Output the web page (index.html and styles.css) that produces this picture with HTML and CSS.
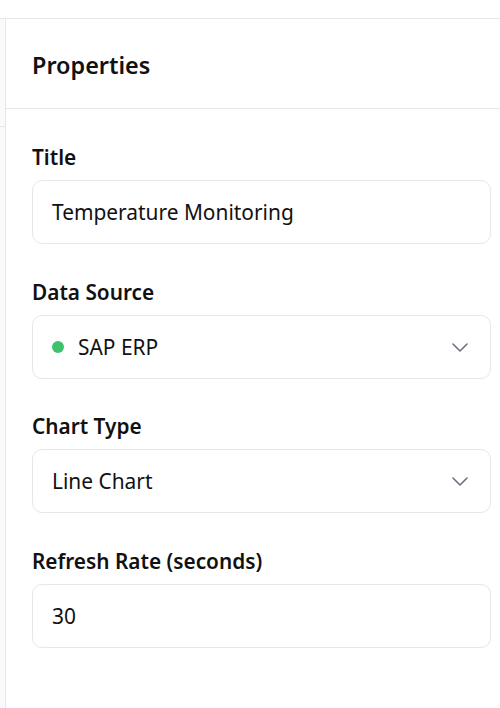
FILE: index.html
```html
<!DOCTYPE html>
<html>
<head>
<meta charset="utf-8">
<link rel="stylesheet" href="styles.css">
</head>
<body>
<div class="app">
  <aside class="side">
    <div class="side-head"></div>
  </aside>
  <section class="panel">
    <header class="panel-head"><h2>Properties</h2></header>
    <div class="panel-body">
      <div class="field">
        <label>Title</label>
        <div class="box">Temperature Monitoring</div>
      </div>
      <div class="field">
        <label>Data Source</label>
        <div class="box select"><span class="dot"></span><span class="val">SAP ERP</span>
          <svg class="chev" viewBox="0 0 16 16" width="16" height="16"><path d="M1 5l7 7 7-7" fill="none" stroke="#6b7280" stroke-width="1.6" stroke-linecap="round" stroke-linejoin="round"/></svg>
        </div>
      </div>
      <div class="field">
        <label>Chart Type</label>
        <div class="box select"><span class="val">Line Chart</span>
          <svg class="chev" viewBox="0 0 16 16" width="16" height="16"><path d="M1 5l7 7 7-7" fill="none" stroke="#6b7280" stroke-width="1.6" stroke-linecap="round" stroke-linejoin="round"/></svg>
        </div>
      </div>
      <div class="field">
        <label>Refresh Rate (seconds)</label>
        <div class="box">30</div>
      </div>
    </div>
  </section>
</div>
</body>
</html>
```
FILE: styles.css
```css
html, body { margin: 0; padding: 0; background: #fff; }
body { font-family: "Noto Sans", "Open Sans", sans-serif; color: #111; height: 708px; overflow: hidden; }
.app { display: flex; margin-top: 18px; border-top: 1px solid #e5e7eb; height: 689px; }
.side { width: 5px; flex: none; background: #f9fafb; border-right: 1px solid #e5e7eb; }
.side-head { height: 107px; border-bottom: 1px solid #e5e7eb; }
.panel { width: 511px; flex: none; }
.panel-head { height: 89px; box-sizing: border-box; height: 90px; border-bottom: 1px solid #e5e7eb; display: flex; align-items: center; padding: 2px 26px 0; }
.panel-head h2 { margin: 0; font-size: 23.4px; font-weight: 600; }
.panel-body { padding: 34px 26px 0; display: flex; flex-direction: column; gap: 33.67px; }
.field { display: flex; flex-direction: column; gap: 9px; }
.field label { font-size: 20.8px; font-weight: 600; line-height: 28px; }
.box { height: 64px; border: 1px solid #e5e7eb; border-radius: 10px; display: flex; align-items: center; padding: 0 19px; font-size: 20.9px; width: 459px; box-sizing: border-box; }
.select .val { flex: 1; }
.dot { width: 12px; height: 12px; border-radius: 50%; background: #3fc26c; margin: 0 14px 0 0; }
.chev { margin-right: 3px; }
```
